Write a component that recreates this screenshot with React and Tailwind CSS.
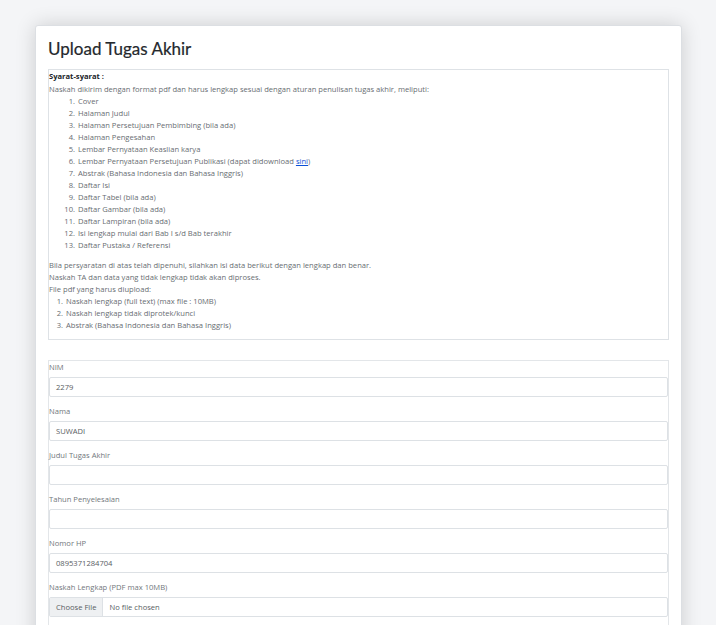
export default function App() {
  const items = [
    "Cover",
    "Halaman Judul",
    "Halaman Persetujuan Pembimbing (bila ada)",
    "Halaman Pengesahan",
    "Lembar Pernyataan Keaslian karya",
    null,
    "Abstrak (Bahasa Indonesia dan Bahasa Inggris)",
    "Daftar Isi",
    "Daftar Tabel (bila ada)",
    "Daftar Gambar (bila ada)",
    "Daftar Lampiran (bila ada)",
    "Isi lengkap mulai dari Bab I s/d Bab terakhir",
    "Daftar Pustaka / Referensi",
  ];
  const fields = [
    ["NIM", "2279"],
    ["Nama", "SUWADI"],
    ["Judul Tugas Akhir", ""],
    ["Tahun Penyelesaian", ""],
    ["Nomor HP", "0895371284704"],
  ];
  return (
    <div className="min-h-[625px] bg-[#f4f5f7] pt-[25px] pl-[35px] pr-[34px] font-['Open_Sans',sans-serif]">
      <div className="w-[647px] min-h-[640px] rounded-[3px] border border-[#dcdfe3] bg-white pl-[12px] pr-[12px] pt-[10px] shadow-[0_0_20px_rgba(0,0,0,0.16)]">
        <h1 className="font-['Lato',sans-serif] text-[17px] leading-[26px] font-normal [-webkit-text-stroke:0.2px_#24282c] text-[#24282c] mb-[7px]">Upload Tugas Akhir</h1>
        <div className="border border-[#dee2e6] px-0 text-[7.6px] leading-[12px] text-[#686d72]">
          <div className="font-bold text-[#212529] leading-[13px]">Syarat-syarat :</div>
          <div>Naskah dikirim dengan format pdf dan harus lengkap sesuai dengan aturan penulisan tugas akhir, meliputi:</div>
          <ol className="list-decimal pl-[28px] mb-[8px]">
            {items.map((t, i) => (
              <li key={i} className="pl-[1px]">
                {t === null ? (
                  <>Lembar Pernyataan Persetujuan Publikasi (dapat didownload <a className="text-[#0b4fd6] underline">sini</a>)</>
                ) : (
                  t
                )}
              </li>
            ))}
          </ol>
          <div>Bila persyaratan di atas telah dipenuhi, silahkan isi data berikut dengan lengkap dan benar.</div>
          <div>Naskah TA dan data yang tidak lengkap tidak akan diproses.</div>
          <div>File pdf yang harus diupload:</div>
          <ol className="list-decimal pl-[16px] mb-[8px]">
            <li className="pl-[1px]">Naskah lengkap (full text) (max file : 10MB)</li>
            <li className="pl-[1px]">Naskah lengkap tidak diprotek/kunci</li>
            <li className="pl-[1px]">Abstrak (Bahasa Indonesia dan Bahasa Inggris)</li>
          </ol>
        </div>
        <div className="mt-[20px] border border-[#e3e6e9] text-[7.6px] leading-[12px] text-[#72777c]">
          {fields.map(([label, value]) => (
            <div key={label} className="mb-[8px]">
              <div className="mb-[4px]">{label}</div>
              <div className="h-[20px] border border-[#dde1e5] rounded-[2px] px-[6px] flex items-center text-[#595e63]">
                {value}
              </div>
            </div>
          ))}
          <div className="mb-[8px]">
            <div className="mb-[4px]">Naskah Lengkap (PDF max 10MB)</div>
            <div className="h-[20px] border border-[#dde1e5] rounded-[2px] flex items-stretch text-[#595e63]">
              <div className="bg-[#eef0f2] border-r border-[#dde1e5] px-[6px] flex items-center">Choose File</div>
              <div className="px-[6px] flex items-center">No file chosen</div>
            </div>
          </div>
        </div>
      </div>
    </div>
  );
}
